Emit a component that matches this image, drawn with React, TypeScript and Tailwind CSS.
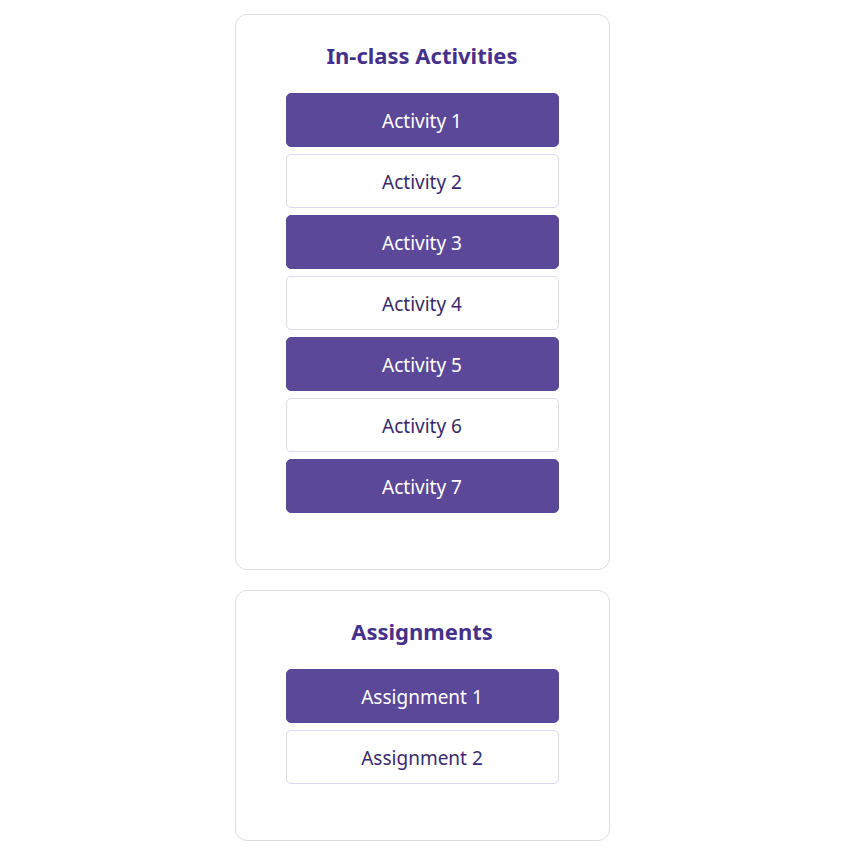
const activities = ["Activity 1", "Activity 2", "Activity 3", "Activity 4", "Activity 5", "Activity 6", "Activity 7"];
const assignments = ["Assignment 1", "Assignment 2"];

const Item = ({ label, filled }: { label: string; filled: boolean }) => (
  <button
    className={
      filled
        ? "h-[54px] w-full rounded-[5px] border border-[#5b4898] bg-[#5b4898] pt-[3px] text-[19px] text-white"
        : "h-[54px] w-full rounded-[5px] border border-[#dcd8ee] bg-white pt-[3px] text-[19px] text-[#3b2a6b]"
    }
  >
    {label}
  </button>
);

const Section = ({ title, items }: { title: string; items: string[] }) => (
  <section className="w-[375px] rounded-xl border border-[#dcdcdc] bg-white px-[50px] pt-6 pb-[56px]">
    <h2 className="mb-[22px] text-center text-[22px] font-bold leading-8 text-[#45308a]">{title}</h2>
    <div className="flex flex-col gap-[7px]">
      {items.map((label, i) => (
        <Item key={label} label={label} filled={i % 2 === 0} />
      ))}
    </div>
  </section>
);

export default function App() {
  return (
    <div
      className="flex min-h-screen flex-col items-center gap-5 bg-white pt-[14px] pr-[5px] pb-2"
      style={{ fontFamily: '"Noto Sans", "Open Sans", sans-serif' }}
    >
      <Section title="In-class Activities" items={activities} />
      <Section title="Assignments" items={assignments} />
    </div>
  );
}
